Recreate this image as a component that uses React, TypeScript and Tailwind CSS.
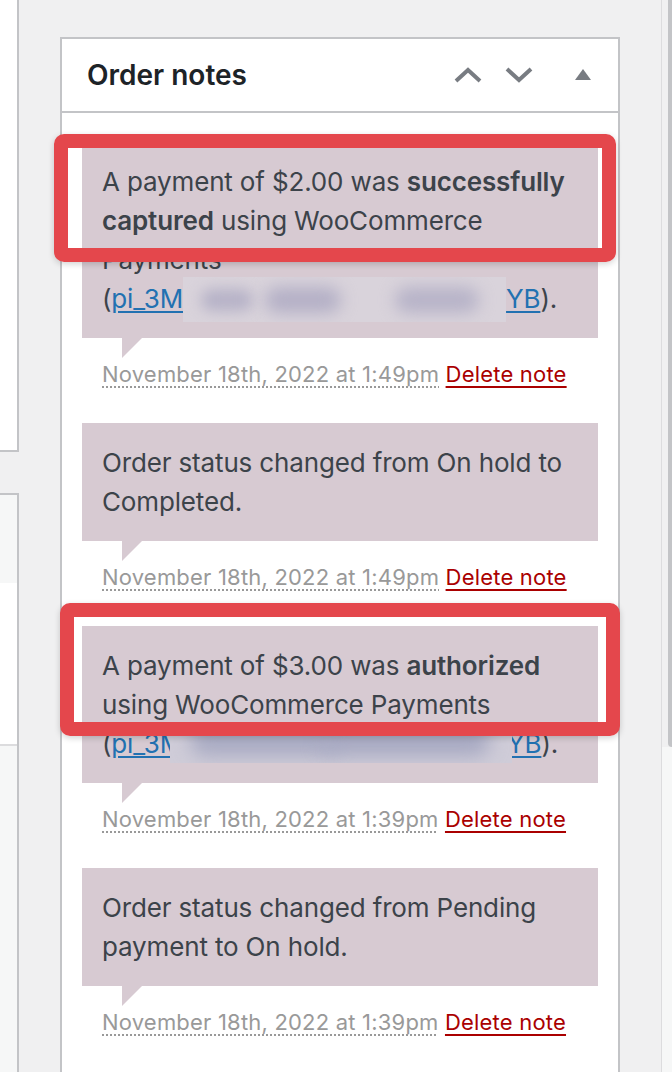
import React from 'react'

function ChevronUp() {
  return (
    <svg width="28" height="16" viewBox="0 0 28 16" fill="none" stroke="#787c82" strokeWidth={4}>
      <path d="M2 14L14 3L26 14" />
    </svg>
  )
}

function ChevronDown() {
  return (
    <svg width="28" height="16" viewBox="0 0 28 16" fill="none" stroke="#787c82" strokeWidth={4}>
      <path d="M2 2L14 13L26 2" />
    </svg>
  )
}

function Caret() {
  return (
    <svg width="16" height="12" viewBox="0 0 16 12" fill="#787c82">
      <path d="M0 11L8 0L16 11Z" />
    </svg>
  )
}

function Highlight({ className }: { className: string }) {
  return (
    <div
      className={
        'pointer-events-none absolute z-20 rounded-[10px] border-[14px] border-[#e4474c] shadow-[0_2px_6px_rgba(0,0,0,0.18)] ' +
        className
      }
    />
  )
}

function Meta({ time }: { time: string }) {
  return (
    <p className="px-[20px] pt-[20px] pb-[20px] text-[22px] leading-[33px] tracking-[0.2px] text-[#999]">
      <abbr className="underline decoration-dotted decoration-[#999] decoration-2 underline-offset-[4px]">
        November 18th, 2022 at {time}
      </abbr>{' '}
      <a className="text-[#a00] underline decoration-2 underline-offset-[4px]">Delete note</a>
    </p>
  )
}

function Note({ children, highlight }: { children: React.ReactNode; highlight?: string }) {
  return (
    <div className="relative bg-[#d7cad2] p-[20px] text-[26px] leading-[39px] tracking-[-0.15px] text-[#3c434a]">
      {children}
      <span className="absolute -bottom-[20px] left-[40px] h-0 w-0 border-t-[20px] border-r-[20px] border-t-[#d7cad2] border-r-transparent" />
      {highlight && <Highlight className={highlight} />}
    </div>
  )
}

export default function App() {
  return (
    <div className="flex h-[1072px] w-[672px] overflow-hidden bg-[#f0f0f1] font-['Inter',sans-serif]">
      {/* left column of neighbouring boxes */}
      <div className="flex w-[19px] shrink-0 flex-col">
        <div className="h-[452px] border-r-2 border-b-2 border-[#c3c4c7] bg-white" />
        <div className="mt-[41px] flex flex-1 flex-col border-t-2 border-r-2 border-[#c3c4c7]">
          <div className="h-[88px] bg-[#f6f7f7]" />
          <div className="h-[163px] border-b-2 border-[#dcdcde] bg-white" />
          <div className="flex-1 bg-[#f6f7f7]" />
        </div>
      </div>

      <main className="ml-[41px] mt-[37px] w-[560px] shrink-0 border-2 border-b-0 border-[#c3c4c7] bg-white">
        <div className="flex h-[74px] items-center border-b-2 border-[#c3c4c7] pl-[25px] pr-[27px]">
          <h2 className="flex-1 text-[28px] font-semibold tracking-[0px] text-[#1d2327]">Order notes</h2>
          <div className="flex items-center">
            <ChevronUp />
            <span className="ml-[23px]">
              <ChevronDown />
            </span>
            <span className="ml-[42px]">
              <Caret />
            </span>
          </div>
        </div>

        <ul className="px-[20px] pt-[29px]">
          <li className="mb-[12px]">
            <Note highlight="-left-[28px] -top-[8px] h-[128px] w-[562px]">
              A payment of $2.00 was <strong className="font-semibold">successfully</strong>
              <br />
              <strong className="font-semibold">captured</strong> using WooCommerce
              <br />
              Payments
              <br />(
              <a className="text-[#2271b1] underline decoration-2 underline-offset-[3px]">pi_3M</a>
              <span className="relative inline-block h-[39px] w-[323px] align-top">
                <span className="absolute inset-x-0 -top-[2px] -bottom-[4px] overflow-hidden bg-[#d9d3db]">
                  <span className="absolute left-[18px] top-[12px] h-[22px] w-[52px] rounded-full bg-[#b6b2c7] blur-[7px]" />
                  <span className="absolute left-[82px] top-[10px] h-[26px] w-[76px] rounded-full bg-[#b4b0c6] blur-[8px]" />
                  <span className="absolute left-[212px] top-[10px] h-[26px] w-[84px] rounded-full bg-[#b7b3c8] blur-[8px]" />
                </span>
              </span>
              <a className="text-[#2271b1] underline decoration-2 underline-offset-[3px]">YB</a>).
            </Note>
            <Meta time="1:49pm" />
          </li>

          <li className="mb-[12px]">
            <Note>
              Order status changed from On hold to
              <br />
              Completed.
            </Note>
            <Meta time="1:49pm" />
          </li>

          <li className="mb-[12px]">
            <Note highlight="-left-[22px] -top-[23px] h-[133px] w-[560px]">
              A payment of $3.00 was <strong className="font-semibold">authorized</strong>
              <br />
              using WooCommerce Payments
              <br />(
              <a className="text-[#2271b1] underline decoration-2 underline-offset-[3px]">pi_3M</a>
              <span className="relative z-10 -mr-[5px] -ml-[13px] inline-block h-[39px] w-[342px] align-top">
                <span className="absolute inset-x-0 -top-[2px] bottom-0 overflow-hidden bg-[#cfccd8]">
                  <span className="absolute left-[20px] top-[4px] h-[30px] w-[150px] rounded-full bg-[#a9abc3] blur-[9px]" />
                  <span className="absolute left-[150px] top-[4px] h-[30px] w-[170px] rounded-full bg-[#a7a9c2] blur-[9px]" />
                </span>
              </span>
              <a className="text-[#2271b1] underline decoration-2 underline-offset-[3px]">YB</a>).
            </Note>
            <Meta time="1:39pm" />
          </li>

          <li className="mb-[12px]">
            <Note>
              Order status changed from Pending
              <br />
              payment to On hold.
            </Note>
            <Meta time="1:39pm" />
          </li>
        </ul>
      </main>

      {/* right edge strip */}
      <div className="ml-[41px] flex w-[11px] shrink-0 flex-col border-l border-[#dcdcde]">
        <div className="flex h-[747px] justify-end">
          <div className="h-full w-[4px] rounded-bl-[4px] bg-[#c3c4c7]" />
        </div>
        <div className="flex-1 bg-[#f6f7f7]" />
      </div>
    </div>
  )
}
